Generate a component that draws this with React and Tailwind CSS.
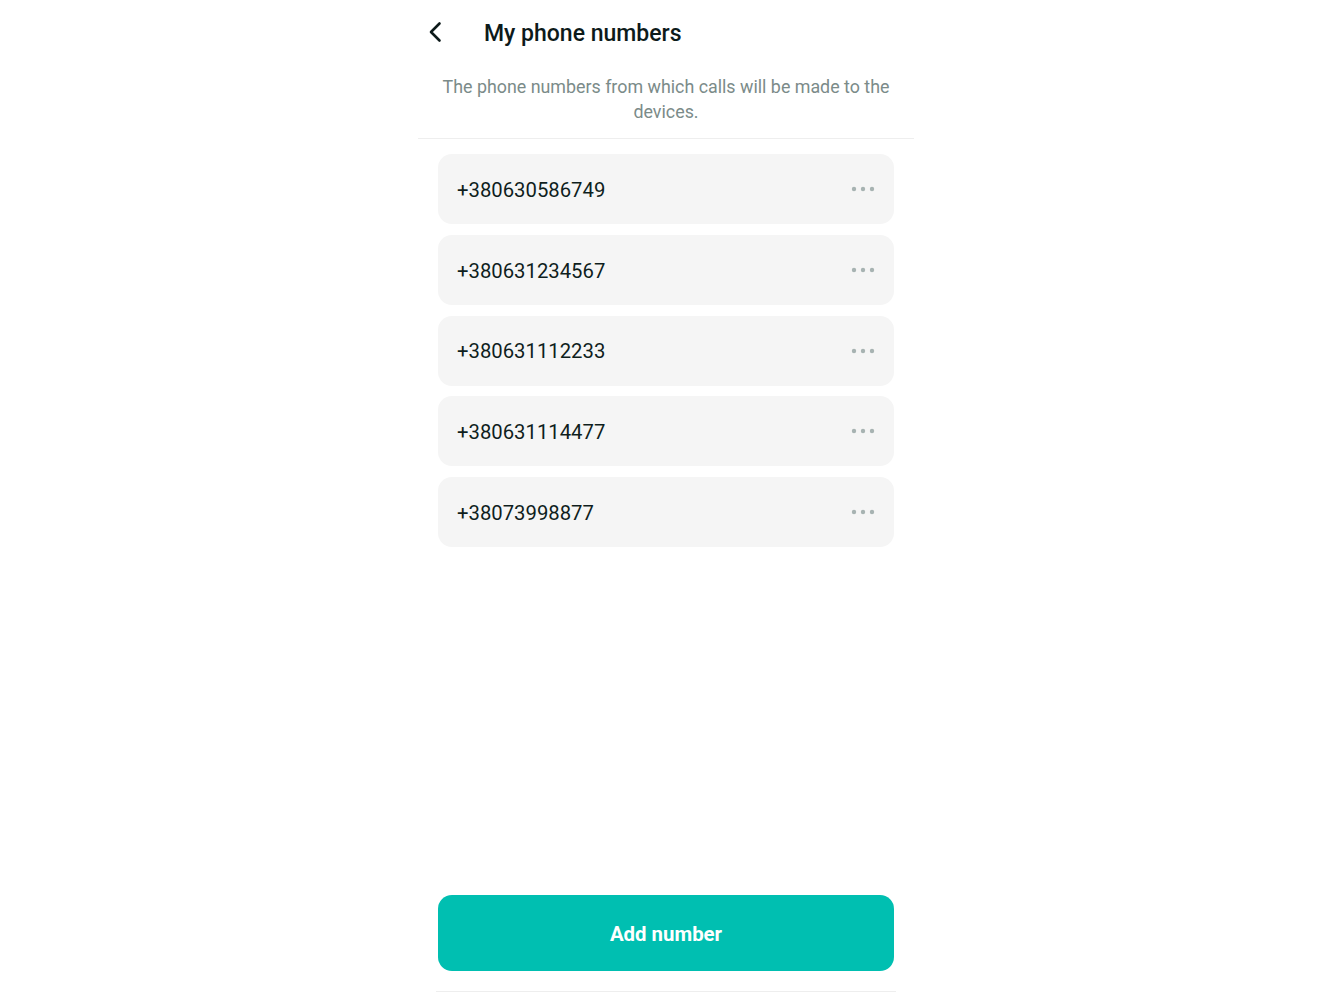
import React from 'react';

const numbers = [
    '+380630586749',
    '+380631234567',
    '+380631112233',
    '+380631114477',
    '+38073998877',
];

const Dots = () => (
    <svg width="24" height="6" viewBox="0 0 24 6" fill="#a7b3b2">
        <circle cx="3" cy="3" r="2.2" />
        <circle cx="12" cy="3" r="2.2" />
        <circle cx="21" cy="3" r="2.2" />
    </svg>
);

const App = () => {
    return (
        <div className="min-h-screen bg-white flex justify-center" style={{ fontFamily: 'Roboto, "Noto Sans", sans-serif' }}>
            <div className="w-[496px] mr-[1px] h-[1000px] flex flex-col">
                {/* Header */}
                <div className="h-[64px] flex items-center">
                    <button className="w-[33px] h-[36px] flex items-center justify-center">
                        <svg width="14" height="22" viewBox="0 0 14 22" fill="none" stroke="#0d1a1a" strokeWidth="2.6" strokeLinecap="round" strokeLinejoin="round">
                            <path d="M11.5 2.5 L3 11 L11.5 19.5" />
                        </svg>
                    </button>
                    <h1 className="ml-[33px] mt-[2px] text-[23px] font-medium text-[#0d1a1a] leading-none">My phone numbers</h1>
                </div>

                <p className="pt-[10px] pb-[14px] px-[22px] text-center text-[17.85px] leading-[25px] text-[#7b8b89]">
                    The phone numbers from which calls will be made to the devices.
                </p>
                <div className="h-px bg-[#eeeeee]" />

                {/* List */}
                <div className="flex flex-col gap-[10.75px] px-[20px] mt-[15px]">
                    {numbers.map((n) => (
                        <div key={n} className="h-[70px] rounded-[14px] bg-[#f5f5f5] flex items-center justify-between pl-[19px] pr-[19px]">
                            <span className="text-[20.3px] text-[#0f1e1d] pt-[2px]">{n}</span>
                            <Dots />
                        </div>
                    ))}
                </div>

                <div className="flex-1" />

                {/* Footer */}
                <div className="px-[20px]">
                    <button className="w-full h-[76px] rounded-[14px] bg-[#00bfb1] text-white text-[20.4px] font-bold pt-[2px]">
                        Add number
                    </button>
                </div>
                <div className="mx-[18px] mt-[20px] mb-[8px] h-px bg-[#eeeeee]" />
            </div>
        </div>
    );
};

export default App;
